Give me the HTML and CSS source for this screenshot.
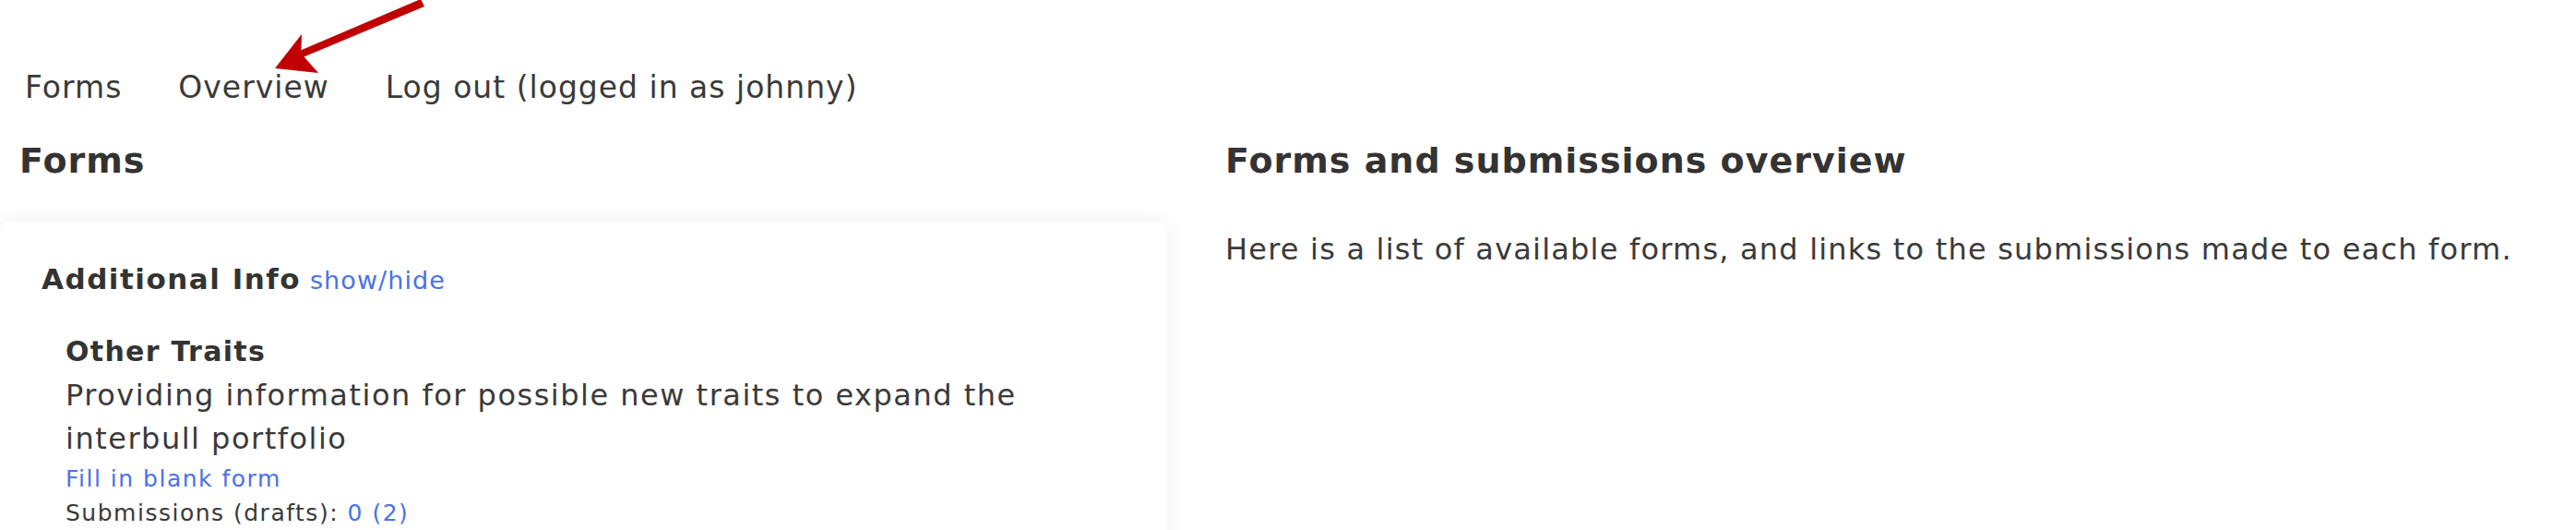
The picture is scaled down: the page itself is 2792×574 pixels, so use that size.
FILE: index.html
```html
<!DOCTYPE html>
<html lang="en">
<head>
<meta charset="utf-8">
<title>Forms and submissions overview</title>
<link rel="stylesheet" href="styles.css">
</head>
<body>
<nav class="nav">
  <a class="nav-link" href="#">Forms</a>
  <a class="nav-link" href="#">Overview</a>
  <a class="nav-link" href="#">Log out (logged in as johnny)</a>
</nav>
<svg class="arrow" width="480" height="90" viewBox="0 0 480 90" aria-hidden="true">
  <polygon points="298,74 327,37 326.5,54.2 456,-1 460,7 329.5,61.6 345,79" fill="#c00000"/>
</svg>
<main class="layout">
  <section class="col-left">
    <h2 class="heading">Forms</h2>
    <div class="card">
      <div class="group-title"><strong>Additional Info</strong> <a class="link toggle" href="#">show/hide</a></div>
      <div class="form-item">
        <h3 class="form-title">Other Traits</h3>
        <p class="form-desc">Providing information for possible new traits to expand the interbull portfolio</p>
        <a class="link small block" href="#">Fill in blank form</a>
        <div class="small">Submissions (drafts): <a class="link" href="#">0</a> <a class="link" href="#">(2)</a></div>
      </div>
    </div>
  </section>
  <section class="col-right">
    <h2 class="heading">Forms and submissions overview</h2>
    <p class="intro">Here is a list of available forms, and links to the submissions made to each form.</p>
  </section>
</main>
</body>
</html>
```
FILE: styles.css
```css
html, body {
  margin: 0;
  padding: 0;
  background: #ffffff;
}
body {
  font-family: "DejaVu Sans", "Noto Sans", sans-serif;
  color: #3a3a3a;
  overflow: hidden;
  height: 574px;
  position: relative;
}
a { text-decoration: none; }

.nav {
  display: flex;
  gap: 61px;
  padding: 75px 0 0 27px;
  font-size: 33px;
  line-height: 40px;
  letter-spacing: 1px;
}
.nav-link { color: #3a3a3a; }

.arrow {
  position: absolute;
  left: 0;
  top: 0;
}

.layout {
  display: flex;
  gap: 63px;
  margin-top: 37px;
}
.col-left { width: 1265px; flex: none; }
.col-right { flex: 1; }

.heading {
  margin: 0;
  font-size: 38px;
  line-height: 44px;
  letter-spacing: 1px;
  font-weight: bold;
  color: #333;
}
.col-left .heading { padding-left: 21px; }

.card {
  margin-top: 44px;
  background: #fff;
  border-radius: 12px;
  box-shadow: 0 0 22px rgba(0, 0, 0, 0.07);
  padding: 44px 40px 40px 45px;
  height: 400px;
}
.group-title {
  font-size: 31px;
  line-height: 36px;
}
.group-title strong {
  font-weight: bold;
  color: #333;
  letter-spacing: 1.5px;
}
.toggle {
  font-size: 27px;
  letter-spacing: 1.1px;
}
.form-item {
  padding-left: 26px;
  margin-top: 41px;
}
.form-title {
  margin: 0;
  font-size: 30px;
  line-height: 36px;
  letter-spacing: 1.3px;
  font-weight: bold;
  color: #333;
}
.form-desc {
  margin: 6px 0 0;
  font-size: 32px;
  line-height: 47px;
  letter-spacing: 1.5px;
}
.small {
  font-size: 25px;
  line-height: 37px;
  letter-spacing: 1.5px;
}
.block { display: block; margin-top: 1px; }
.link { color: #4a72e8; }

.intro {
  margin: 51px 0 0;
  font-size: 32px;
  line-height: 47px;
  letter-spacing: 1.2px;
}
```
